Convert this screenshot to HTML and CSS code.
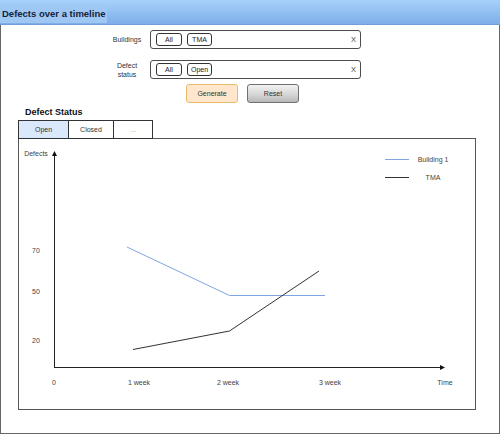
FILE: index.html
```html
<!DOCTYPE html>
<html>
<head>
<meta charset="utf-8">
<link rel="stylesheet" href="styles.css">
</head>
<body>
<div class="window">
  <div class="titlebar"><span class="title">Defects over a timeline</span></div>
  <div class="content">
    <div class="form">
      <div class="row row-first">
        <div class="label">Buildings</div>
        <div class="input">
          <span class="chip chip-all">All</span>
          <span class="chip">TMA</span>
          <span class="clear">X</span>
        </div>
      </div>
      <div class="row row-second">
        <div class="label">Defect<br>status</div>
        <div class="input">
          <span class="chip chip-all">All</span>
          <span class="chip">Open</span>
          <span class="clear">X</span>
        </div>
      </div>
      <div class="row buttons">
        <button class="btn btn-generate">Generate</button>
        <button class="btn btn-reset">Reset</button>
      </div>
    </div>
    <h2 class="heading">Defect Status</h2>
    <div class="tabs">
      <div class="tab tab-open active">Open</div>
      <div class="tab tab-closed">Closed</div>
      <div class="tab tab-more">...</div>
    </div>
    <div class="chart">
      <svg class="chart-svg" width="456" height="270" viewBox="0 0 456 270">
        <line x1="35.5" y1="228.5" x2="35.5" y2="16" class="axis"/>
        <polygon points="35.5,12 33,17 38,17" class="arrow"/>
        <line x1="35" y1="228.5" x2="422" y2="228.5" class="axis"/>
        <polygon points="426,228.5 421,226 421,231" class="arrow"/>
        <text x="17" y="16.5" class="lbl" text-anchor="middle">Defects</text>
        <text x="17" y="113.5" class="lbl" text-anchor="middle">70</text>
        <text x="17" y="155" class="lbl" text-anchor="middle">50</text>
        <text x="17" y="203.5" class="lbl" text-anchor="middle">20</text>
        <text x="35" y="245.5" class="lbl" text-anchor="middle">0</text>
        <text x="120" y="245.5" class="lbl" text-anchor="middle">1 week</text>
        <text x="209" y="245.5" class="lbl" text-anchor="middle">2 week</text>
        <text x="311" y="245.5" class="lbl" text-anchor="middle">3 week</text>
        <text x="426" y="245.5" class="lbl" text-anchor="middle">Time</text>
        <polyline points="108,108 210.5,156.5 306,156.5" class="line-blue"/>
        <polyline points="114,210.5 210.5,192 300,132" class="line-dark"/>
        <line x1="366" y1="20.5" x2="390" y2="20.5" class="line-blue"/>
        <line x1="366" y1="38.5" x2="390" y2="38.5" class="line-dark"/>
        <text x="414" y="23" class="lbl" text-anchor="middle">Building 1</text>
        <text x="414" y="41" class="lbl" text-anchor="middle">TMA</text>
      </svg>
    </div>
  </div>
</div>
</body>
</html>
```
FILE: styles.css
```css
html, body {
  margin: 0;
  padding: 0;
  background: #ffffff;
}

body {
  font-family: "Liberation Sans", Arial, sans-serif;
  color: #333333;
}

.window {
  width: 500px;
  height: 434px;
  display: flex;
  flex-direction: column;
}

.titlebar {
  height: 25px;
  box-sizing: border-box;
  background: linear-gradient(to bottom, #a8d1fb 0%, #92c0f2 50%, #7eade7 100%);
  border-bottom: 1px solid #6f9fd8;
  display: flex;
  align-items: center;
}

.title {
  display: inline-block;
  margin-top: 3px;
  height: 18px;
  line-height: 18px;
  padding: 0 1px 0 2px;
  font-size: 9.5px;
  font-weight: bold;
  color: #14233a;
  background: #9ec8f3;
}

.content {
  flex: 1;
  box-sizing: border-box;
  border: 1px solid #666666;
  border-top: none;
}

.form {
  padding-top: 5px;
  padding-left: 106px;
}

.row {
  display: flex;
  align-items: center;
}

.row-first {
  margin-bottom: 11px;
}

.row-second {
  margin-bottom: 5px;
}

.label {
  width: 40px;
  margin-right: 3px;
  text-align: center;
  font-size: 7px;
  line-height: 9px;
  color: #333333;
}

.input {
  width: 211px;
  height: 19px;
  box-sizing: border-box;
  border: 1px solid #4d4d4d;
  border-radius: 3px;
  display: flex;
  align-items: center;
  padding-left: 5px;
  padding-right: 4px;
}

.chip {
  width: 25px;
  height: 13px;
  box-sizing: border-box;
  border: 1px solid #333333;
  border-radius: 3px;
  font-size: 7px;
  line-height: 11px;
  text-align: center;
  color: #222222;
}

.chip-all {
  width: 26px;
  margin-right: 5px;
}

.clear {
  margin-left: auto;
  font-size: 7.5px;
  color: #444444;
}

.buttons {
  padding-left: 79px;
}

.btn {
  height: 19px;
  box-sizing: border-box;
  border-radius: 3px;
  font-family: "Liberation Sans", Arial, sans-serif;
  font-size: 7px;
  color: #333333;
  padding: 0;
  margin: 0;
}

.btn-generate {
  width: 52px;
  background: #ffe6cc;
  border: 1px solid #e9bc6a;
  margin-right: 9px;
}

.btn-reset {
  width: 52px;
  background: linear-gradient(to bottom, #f2f2f2 0%, #d6d6d6 55%, #b8b8b8 100%);
  border: 1px solid #707070;
}

.heading {
  margin: 3px 0 2px 24px;
  font-size: 9px;
  line-height: 12px;
  font-weight: bold;
  color: #111111;
}

.tabs {
  display: flex;
  margin-left: 17px;
  margin-bottom: -1px;
}

.tab {
  height: 19px;
  box-sizing: border-box;
  border: 1px solid #333333;
  border-left: none;
  font-size: 7px;
  line-height: 17px;
  text-align: center;
  color: #333333;
  background: #ffffff;
}

.tab-open {
  width: 51px;
  border-left: 1px solid #333333;
}

.tab-closed {
  width: 45px;
}

.tab-more {
  width: 39px;
  color: #999999;
}

.tab.active {
  background: #dae8fc;
}

.chart {
  margin-left: 17px;
  width: 458px;
  height: 272px;
  box-sizing: border-box;
  border: 1px solid #555555;
}

.chart-svg {
  display: block;
}

.axis {
  stroke: #222222;
  stroke-width: 1;
}

.arrow {
  fill: #111111;
}

.lbl {
  font-family: "Liberation Sans", Arial, sans-serif;
  font-size: 7px;
  fill: #444444;
}

.line-blue {
  fill: none;
  stroke: #7ea6e0;
  stroke-width: 1;
}

.line-dark {
  fill: none;
  stroke: #333333;
  stroke-width: 1;
}
```
